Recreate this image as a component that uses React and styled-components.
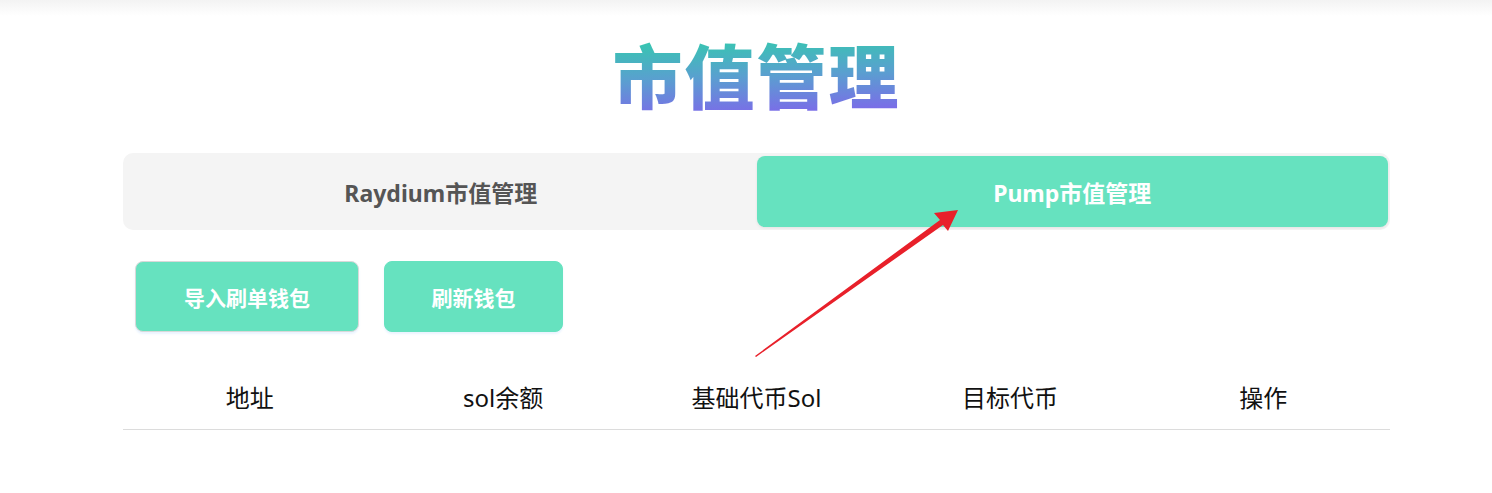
import React from "react";
import styled, { createGlobalStyle } from "styled-components";

const GlobalStyle = createGlobalStyle`
  body {
    margin: 0;
    background: #ffffff;
    font-family: "Noto Sans", "Noto Sans CJK SC", sans-serif;
  }
`;

const Page = styled.div`
  position: relative;
  min-height: 493px;
`;

const TopShade = styled.div`
  height: 16px;
  background: linear-gradient(to bottom, #f3f3f3, #ffffff);
`;

const Container = styled.div`
  width: 1267px;
  margin-left: 123px;
`;

const TitleWrap = styled.div`
  height: 137px;
  padding-top: 11px;
  box-sizing: border-box;
  display: flex;
  justify-content: center;
  align-items: flex-start;
`;

const Title = styled.h1`
  margin: 0;
  font-size: 70px;
  line-height: 94px;
  font-weight: 900;
  font-family: "Noto Sans CJK SC", sans-serif;
  letter-spacing: 2px;
  background: linear-gradient(178deg, #36c7b0 15%, #5a9fd0 52%, #7b6ce8 88%);
  -webkit-background-clip: text;
  background-clip: text;
  color: transparent;
`;

const Tabs = styled.div`
  display: flex;
  padding: 3px 2px;
  height: 77px;
  box-sizing: border-box;
  background: #f4f4f4;
  border-radius: 10px;
`;

const Tab = styled.div`
  flex: 1;
  display: flex;
  align-items: center;
  justify-content: center;
  border-radius: 8px;
  font-size: 23px;
  font-weight: 700;
  color: ${(p) => (p.$active ? "#ffffff" : "#555555")};
  background: ${(p) => (p.$active ? "#66e2bf" : "transparent")};
  box-shadow: ${(p) => (p.$active ? "0 1px 3px rgba(0,0,0,0.08)" : "none")};
`;

const Actions = styled.div`
  display: flex;
  gap: 25px;
  padding: 31px 0 0 12px;
`;

const ActionButton = styled.button`
  height: 71px;
  padding: 0 ${(p) => p.$pad}px;
  border: 1px solid ${(p) => (p.$outlined ? "#d9d9d9" : "#66e2bf")};
  border-radius: 8px;
  background: #66e2bf;
  color: #ffffff;
  font-family: "Noto Sans CJK SC", sans-serif;
  font-size: 21px;
  font-weight: 700;
  box-shadow: 0 2px 2px rgba(120, 180, 255, 0.15);
  cursor: pointer;
`;

const HeaderRow = styled.div`
  display: grid;
  grid-template-columns: repeat(5, 1fr);
  margin-top: 33px;
  height: 64px;
  align-items: center;
  border-bottom: 1px solid #dcdcdc;
`;

const HeaderCell = styled.div`
  text-align: center;
  font-size: 24px;
  color: #111111;
  font-family: "Noto Sans", "Noto Sans CJK SC", sans-serif;
  padding-bottom: 2px;
`;

const Arrow = styled.svg`
  position: absolute;
  left: 0;
  top: 0;
  pointer-events: none;
`;

const columns = ["地址", "sol余额", "基础代币Sol", "目标代币", "操作"];

export default function App() {
  return (
    <Page>
      <GlobalStyle />
      <TopShade />
      <Container>
        <TitleWrap>
          <Title>市值管理</Title>
        </TitleWrap>
        <Tabs>
          <Tab>Raydium市值管理</Tab>
          <Tab $active>Pump市值管理</Tab>
        </Tabs>
        <Actions>
          <ActionButton $outlined $pad={48}>导入刷单钱包</ActionButton>
          <ActionButton $pad={46.5}>刷新钱包</ActionButton>
        </Actions>
        <HeaderRow>
          {columns.map((c) => (
            <HeaderCell key={c}>{c}</HeaderCell>
          ))}
        </HeaderRow>
      </Container>
      <Arrow width="1492" height="493" viewBox="0 0 1492 493">
        <polygon
          points="755,356 940,220 934,213 958,210 948,231 943,225 756,357"
          fill="#e8202a"
        />
      </Arrow>
    </Page>
  );
}
